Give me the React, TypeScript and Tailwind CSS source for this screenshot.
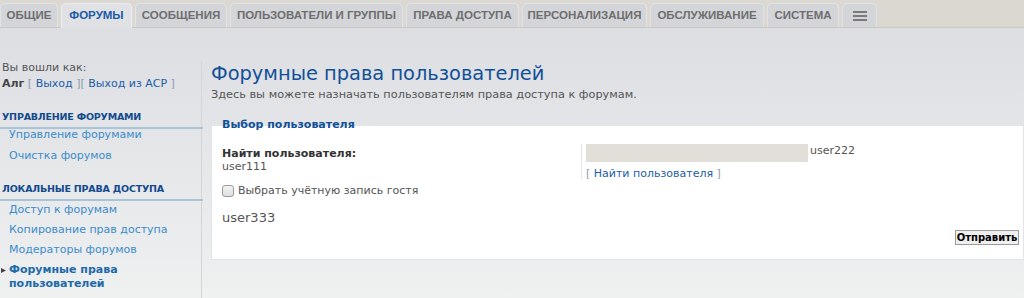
import React from "react";

const tabs = [
  { label: "ОБЩИЕ", w: 58 },
  { label: "ФОРУМЫ", w: 71, active: true },
  { label: "СООБЩЕНИЯ", w: 92 },
  { label: "ПОЛЬЗОВАТЕЛИ И ГРУППЫ", w: 173 },
  { label: "ПРАВА ДОСТУПА", w: 113 },
  { label: "ПЕРСОНАЛИЗАЦИЯ", w: 125 },
  { label: "ОБСЛУЖИВАНИЕ", w: 114 },
  { label: "СИСТЕМА", w: 72 },
];

export default function App() {
  return (
    <div
      className="w-[1024px] h-[298px] overflow-hidden flex flex-col text-[#536482]"
      style={{ fontFamily: '"DejaVu Sans", Verdana, sans-serif' }}
    >
      {/* Tab bar */}
      <div className="h-[28px] shrink-0 bg-[#dbd8d1] border-b border-[#c9c7c1] flex items-end gap-[3px] pl-0">
        {tabs.map((t) => (
          <div
            key={t.label}
            style={{ width: t.w, fontFamily: '"Liberation Sans", Arial, sans-serif' }}
            className={
              t.active
                ? "h-[25px] -mb-px rounded-t-[5px] bg-[#dfe1e4] border border-b-0 border-[#eceef0] flex items-center justify-center text-[11.5px] font-bold text-[#1a5aa6]"
                : "h-[24px] rounded-t-[5px] bg-[#d3d5d9] border border-b-0 border-[#e2e3e5] flex items-center justify-center text-[11.5px] font-bold text-[#6e6e6e]"
            }
          >
            {t.label}
          </div>
        ))}
        <div className="w-[35px] h-[24px] rounded-t-[5px] bg-[#d3d5d9] border border-b-0 border-[#e2e3e5] flex items-center justify-center">
          <svg width="14" height="10" viewBox="0 0 14 10">
            <rect x="0" y="0" width="14" height="2" fill="#7a7a7a" />
            <rect x="0" y="4" width="14" height="2" fill="#7a7a7a" />
            <rect x="0" y="8" width="14" height="2" fill="#7a7a7a" />
          </svg>
        </div>
      </div>

      {/* Body */}
      <div className="flex-1 flex bg-gradient-to-b from-[#dcdee2] to-[#eff0f0]">
        {/* Sidebar */}
        <aside className="w-[202px] shrink-0 mt-[33px] border-r border-[#d3d5d8] text-[11px] leading-[14px]">
          <div className="pl-[2px] text-[#555]">Вы вошли как:</div>
          <div className="pl-[2px] mt-[2px] text-[#555]">
            <b className="text-[#444]">Алг</b>{" "}
            <span className="text-[#8a9bb0]">[</span>{" "}
            <span className="text-[#1b5da8]">Выход</span>{" "}
            <span className="text-[#8a9bb0]">][</span>{" "}
            <span className="text-[#1b5da8]">Выход из ACP</span>{" "}
            <span className="text-[#8a9bb0]">]</span>
          </div>

          <div className="mt-[19px] mr-[-2px] pl-[2px] pb-[3px] border-b-2 border-[#a9c3d8] text-[9.5px] font-bold text-[#114a8e] tracking-[-0.2px]">
            УПРАВЛЕНИЕ ФОРУМАМИ
          </div>
          <div className="pl-[9px] mt-[-1px] flex flex-col gap-[7px] text-[#3a8ccb]">
            <div>Управление форумами</div>
            <div>Очистка форумов</div>
          </div>

          <div className="mt-[19px] mr-[-2px] pl-[2px] pb-[3px] border-b-2 border-[#a9c3d8] text-[9.5px] font-bold text-[#114a8e] tracking-[-0.2px]">
            ЛОКАЛЬНЫЕ ПРАВА ДОСТУПА
          </div>
          <div className="pl-[9px] mt-[2px] flex flex-col gap-[6px] text-[#3a8ccb]">
            <div>Доступ к форумам</div>
            <div>Копирование прав доступа</div>
            <div>Модераторы форумов</div>
            <div className="relative font-bold text-[#1d6aa9]">
              <svg
                className="absolute left-[-8px] top-[5px]"
                width="5"
                height="5"
                viewBox="0 0 5 5"
              >
                <polygon points="0,0 5,2.5 0,5" fill="#444" />
              </svg>
              Форумные права
              <br />
              пользователей
            </div>
          </div>
        </aside>

        {/* Main */}
        <main className="flex-1 pl-[9px] pt-[33px]">
          <h1 className="text-[19.4px] leading-[26px] text-[#115098] font-normal">
            Форумные права пользователей
          </h1>
          <p className="text-[11.3px] leading-[14px] text-[#555] mt-[1px]">
            Здесь вы можете назначать пользователям права доступа к форумам.
          </p>

          <fieldset className="mt-[23px] bg-white border border-[#e2e4e6] pt-0 pb-[12px] pl-[10px] pr-[4px] h-[135px] relative">
            <legend className="absolute -top-[8px] left-[10px] text-[11px] font-bold text-[#115098] leading-[14px]">
              Выбор пользователя
            </legend>
            <div className="flex mt-[20px]">
              <div className="w-[359px] shrink-0 pt-[1px]">
                <div className="text-[11px] font-bold text-[#333] leading-[13px]">
                  Найти пользователя:
                </div>
                <div className="text-[11px] text-[#555] leading-[13px]">user111</div>
                <label className="flex items-center gap-[4px] mt-[10px] text-[11px] text-[#555]">
                  <span className="w-[12px] h-[12px] rounded-[3px] border border-[#9a9a9a] bg-gradient-to-b from-[#f4f4f4] to-[#dedede]"></span>
                  Выбрать учётную запись гостя
                </label>
                <div className="mt-[8px] text-[13px] text-[#555]">user333</div>
              </div>
              <div className="border-l border-[#e6e6e6] h-[35px] pl-[4px] -mt-[2px]">
                <div className="flex items-start">
                  <div className="w-[222px] h-[18px] bg-[#e2dfd9]"></div>
                  <span className="ml-[2px] text-[11px] text-[#555] leading-[13px]">user222</span>
                </div>
                <div className="text-[11px] leading-[14px] mt-[5px]">
                  <span className="text-[#8a9bb0]">[</span>{" "}
                  <span className="text-[#1b5da8]">Найти пользователя</span>{" "}
                  <span className="text-[#8a9bb0]">]</span>
                </div>
              </div>
            </div>
            <div className="flex justify-end mt-[3px]">
              <button className="w-[64px] h-[15px] bg-[#efefef] border border-[#9c9c9c] text-[10px] font-bold text-[#000] leading-[13px] px-0">
                Отправить
              </button>
            </div>
          </fieldset>
        </main>
      </div>
    </div>
  );
}
